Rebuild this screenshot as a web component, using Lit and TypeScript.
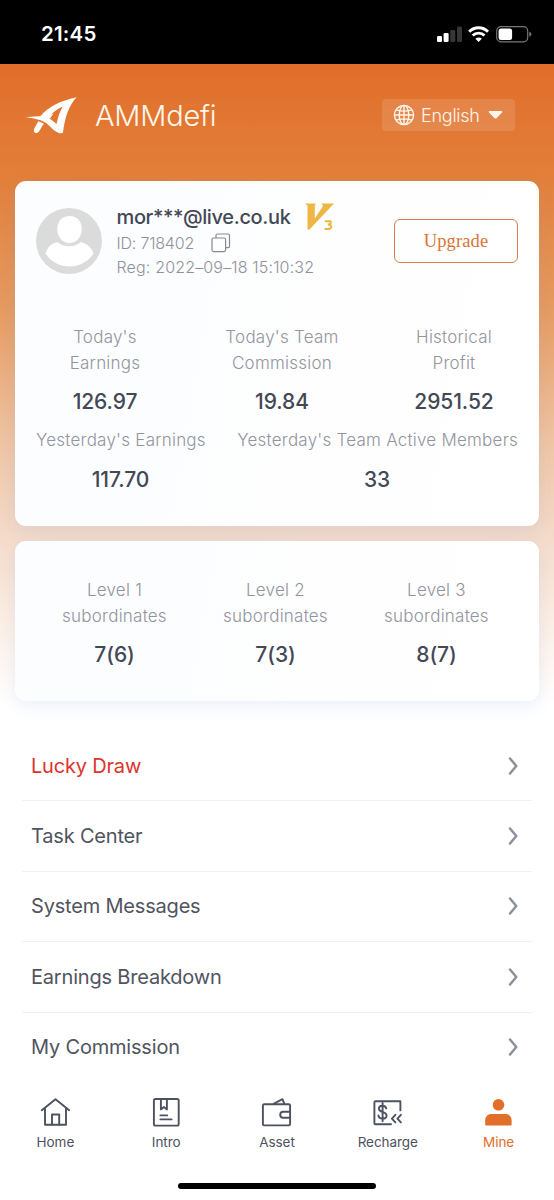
import { LitElement, html, css, svg } from "lit";
import { customElement } from "lit/decorators.js";
import { classMap } from "lit/directives/class-map.js";

const navIcons = {
  home: svg`<path d="M1.800 13.200 15.500 2.300 29.200 13.200"/><path d="M5 11.500V27.700H26V11.500"/><path d="M12 27.700V17.500H19.200V27.700"/>`,
  intro: svg`<rect x="2.900" y="2" width="24.800" height="26.600" rx="1.600"/><path d="M9.900 2V12.400L12.900 10 15.900 12.400V2"/><path d="M9.400 18.400H16.200M9.400 22.400H20.600"/>`,
  asset: svg`<rect x="1.900" y="7.200" width="27.200" height="21.200" rx="1.400"/><path d="M12.600 6.800 21.400 2.200 23.400 6.800"/><path d="M29 14.800H22.200a3 3 0 0 0 0 6H29"/>`,
  recharge: svg`<path d="M28.400 13.400V4.300H3.400a1 1 0 0 0-1 1V26.300a1 1 0 0 0 1 1H19"/><path d="M14.300 11.400C13.800 9.400 12.300 8.700 10.400 8.700 8.300 8.700 6.900 9.900 6.900 11.700c0 4.300 7.700 2.500 7.700 6.700 0 2-1.700 3.200-4.100 3.200-2.300 0-3.900-1.100-4.100-3.200M10.600 6V24.300"/><path d="M23.400 17.800 19.900 21.600 23.400 25.400M28.900 17.800 25.400 21.600 28.900 25.400"/>`,
  mine: svg`<circle cx="15.500" cy="7.800" r="5.800" fill="currentColor" stroke="none"/><path fill="currentColor" stroke="none" d="M2.200 27.500V23.600C2.200 19.500 4.800 17 8.800 17H22.200C26.200 17 28.600 19.500 28.600 23.600V27.500Q28.600 28.400 27.700 28.400H3.100Q2.200 28.400 2.200 27.500Z"/>`,
};

@customElement("app-root")
export class AppRoot extends LitElement {
  static styles = css`
    :host { display: block; font-family: Inter, "Liberation Sans", sans-serif; color: #434855; }
    * { box-sizing: border-box; }
    svg { display: block; flex: none; }
    .screen { width: 554px; height: 1200px; overflow: hidden; display: flex; flex-direction: column; background: #fff; }
    .status { height: 64px; flex: none; background: #000; color: #fff; display: flex; justify-content: space-between; align-items: center; padding: 3px 22px 0 41px; }
    .time { font-size: 20.500px; font-weight: 600; letter-spacing: 0.200px; }
    .body { flex: 1; min-height: 0; display: flex; flex-direction: column; background: linear-gradient(#e16e2a 0, #e2803b 116px, #e69b60 246px, #efc4a2 376px, #f4dccb 476px, #fbeee4 556px, #fff 640px); }
    .top { height: 117px; flex: none; display: flex; justify-content: space-between; align-items: center; padding: 0 39px 15px 26px; color: #fff7ee; }
    .brand { display: flex; align-items: center; gap: 18px; font-size: 29px; font-weight: 300; letter-spacing: -0.200px; }
    .lang { width: 133px; height: 32px; border-radius: 4px; background: rgba(255, 255, 255, 0.12); display: flex; align-items: center; padding: 0 12px 0 11px; font-size: 18px; font-weight: 300; letter-spacing: -0.250px; }
    .word { flex: 1; padding-left: 6px; }
    .card { margin: 0 15px 15px; border-radius: 11px; flex: none; background: linear-gradient(100deg, #fbfdff, #fefefe 65%, #fff); box-shadow: 0 5px 16px rgba(110, 145, 220, 0.140); }
    .account { height: 345px; padding: 23px 21px 0; }
    .team { height: 160px; padding: 37px 21px 0 19px; display: grid; grid-template-columns: repeat(3, 161px); }
    .profile { display: flex; height: 75px; }
    .avatar { margin-top: 4px; }
    .who { flex: 1; margin-left: 14.500px; white-space: nowrap; }
    .line { display: flex; align-items: center; }
    .mail { height: 26px; font-size: 20px; font-weight: 500; letter-spacing: -0.360px; gap: 15px; }
    .meta { height: 25px; font-size: 16px; font-weight: 300; color: #8f929c; gap: 17px; letter-spacing: -0.200px; }
    .reg { letter-spacing: 0.160px; height: 24px; }
    .upgrade { margin-top: 15px; width: 124px; height: 44px; border: 1px solid #dd8047; border-radius: 6px; background: none; padding: 0; color: #d97436; font: 18.500px "Liberation Serif", serif; letter-spacing: 0.100px; }
    .stats { margin-top: 46px; display: grid; grid-template-columns: 138px 1fr 128px; }
    .pair { margin-top: 16px; display: flex; justify-content: space-between; }
    .stat { display: flex; flex-direction: column; align-items: center; text-align: center; white-space: pre-line; }
    .label { font-size: 17px; font-weight: 300; line-height: 25.500px; letter-spacing: 0.230px; color: #92949e; }
    .value { margin-top: 10px; font-size: 21px; font-weight: 500; line-height: 32px; margin-bottom: -6px; letter-spacing: -0.080px; }
    .pair .value { margin-left: -1px; }
    .menu { margin: 15px 22px 0; flex: none; }
    .item { height: 70.400px; display: flex; align-items: center; justify-content: space-between; padding: 0 13px 0 9px; border-bottom: 1px solid #f0f1f3; font-size: 20px; font-weight: 400; letter-spacing: -0.190px; color: #50545f; }
    .item:last-child { border-color: transparent; }
    .lucky { color: #dc342c; }
    .nav { height: 117px; flex: none; background: #fff; display: grid; grid-template-columns: repeat(5, 1fr); grid-template-rows: 100px 6px; }
    .tab { display: flex; flex-direction: column; align-items: center; padding-top: 14px; gap: 4px; font-size: 13.500px; line-height: 20px; letter-spacing: -0.050px; color: #4d5260; }
    .active { color: #e16e2a; }
    .bar { grid-column: 1 / -1; justify-self: center; width: 198px; height: 6px; border-radius: 3px; background: #000; }
  `;

  private stat(label: string, value: string) {
    return html`<div class="stat"><span class="label">${label}</span><span class="value">${value}</span></div>`;
  }

  private tab(icon: keyof typeof navIcons, label: string) {
    return html`<div class=${classMap({ tab: true, active: icon === "mine" })}>
      <svg width="31" height="31" viewBox="0 0 31 31" fill="none" stroke="currentColor" stroke-width="1.900" stroke-linejoin="round" stroke-linecap="round">${navIcons[icon]}</svg>
      <span>${label}</span>
    </div>`;
  }

  render() {
    return html`<div class="screen">
      <div class="status">
        <span class="time">21:45</span>
        <svg width="96" height="18" viewBox="0 0 96 18" fill="none">
          <g fill="#fff"><rect x="1" y="11" width="5" height="6" rx="1.300"/><rect x="7.600" y="8" width="5" height="9" rx="1.300"/></g>
          <g fill="#363636"><rect x="14.300" y="5" width="5" height="12" rx="1.300"/><rect x="21" y="1.500" width="5" height="15.500" rx="1.300"/></g>
          <g stroke="#fff" stroke-width="2.900"><path d="M33.200 6.700A13.200 13.200 0 0 1 52 6.700"/><path d="M36.700 10.600A8.300 8.300 0 0 1 48.500 10.600"/></g>
          <path fill="#fff" d="M42.600 17 39.400 13.700A4.600 4.600 0 0 1 45.800 13.700Z"/>
          <rect x="60.700" y="1.600" width="31" height="15.200" rx="4.300" stroke="#777" stroke-width="1.200"/>
          <rect x="62.600" y="3.500" width="13.500" height="11.500" rx="2.500" fill="#fff"/>
          <path fill="#777" d="M93.300 6.700Q95.300 7.500 95.300 9.200T93.300 11.700Z"/>
        </svg>
      </div>
      <div class="body">
        <div class="top">
          <div class="brand">
            <svg width="51" height="37" viewBox="0 0 51 37" fill="#fff">
              <path fill-rule="evenodd" d="M50.500 .3C43 8.500 39.200 19 37 35.500Q36.500 36.500 34 36.200 29.500 35.500 24 29.500 20.500 25.500 15.500 23.500 8 21.200 0 20.300 8 19.300 14.200 19.300 26 5.500 50.500 .3ZM36.500 9.500Q29 13 23.200 19.500L20.500 20.300Q25 22 30.500 27 32 18 36.500 9.500Z"/>
              <path d="M12.300 24.300 17.800 26.500 13 34.500Q10.500 37 8.700 35.500 7 34 8.500 31Z"/>
              <path d="M13 20.200Q21 19.600 27.500 16.500L24 21.500 17 23.500Z"/>
            </svg>
            <span>AMMdefi</span>
          </div>
          <div class="lang">
            <svg width="22" height="22" viewBox="0 0 22 22" fill="none" stroke="currentColor" stroke-width="1.400"><circle cx="11" cy="11" r="9.600"/><ellipse cx="11" cy="11" rx="4.800" ry="9.600"/><path d="M11 1.400V20.600M1.400 11H20.600M3.200 5.800Q11 8.400 18.800 5.800M3.200 16.200Q11 13.600 18.800 16.200"/></svg>
            <span class="word">English</span>
            <svg width="15" height="8" viewBox="0 0 15 8" fill="currentColor"><path d="M1.400 0H13.600Q14.800 .3 14 1.400L8.500 7.200Q7.500 8 6.500 7.200L1 1.400Q.2 .3 1.400 0Z"/></svg>
          </div>
        </div>
        <section class="card account">
          <div class="profile">
            <svg class="avatar" width="66" height="66" viewBox="0 0 66 66"><circle cx="33" cy="33" r="33" fill="#dbdbdb"/><path fill="#fff" d="M9.500 45.500C12 37.500 17 34.800 21.500 34.300 27.500 39.500 38.500 39.500 44.500 34.300 49 34.800 55 38 57.500 45.500 52 54 43 58.500 33.500 58.500S15 54 9.500 45.500Z"/><path fill="#fff" stroke="#dbdbdb" stroke-width="1" d="M33.500 7.500C42 7.500 46.500 14 46.200 21.500 46 29 41 35.500 33.500 35.500S21 29 20.800 21.500C20.600 14 25 7.500 33.500 7.500Z"/></svg>
            <div class="who">
              <div class="line mail"><span>mor***@live.co.uk</span>
                <svg width="30" height="28" viewBox="0 0 30 28" fill="none"><path fill="#edb645" d="M0 .5H11L9.800 2.500V15.500L18 3 16.500 .5H29L4.500 26.500H2.500V2.800Z"/><path d="M19.800 18.300H25.500Q27 20.800 23 21.500 26.700 21.800 26.200 24.300 25.300 26.500 19.500 25.800" stroke="#edb645" stroke-width="2"/></svg>
              </div>
              <div class="line meta"><span>ID: 718402</span>
                <svg width="20" height="20" viewBox="0 0 20 20" fill="none" stroke="#858997" stroke-width="1.200"><rect x="1" y="5" width="13.600" height="13.600" rx="1.500"/><path d="M5 5V2.500Q5 1 6.500 1H17Q18.500 1 18.500 2.500V13Q18.500 14.600 17 14.600H14.600"/></svg>
              </div>
              <div class="line meta reg">Reg: 2022–09–18 15:10:32</div>
            </div>
            <button class="upgrade">Upgrade</button>
          </div>
          <div class="stats">
            ${this.stat("Today's\nEarnings", "126.97")}
            ${this.stat("Today's Team\nCommission", "19.84")}
            ${this.stat("Historical\nProfit", "2951.52")}
          </div>
          <div class="pair">
            ${this.stat("Yesterday's Earnings", "117.70")}
            ${this.stat("Yesterday's Team Active Members", "33")}
          </div>
        </section>
        <section class="card team">
          ${this.stat("Level 1\nsubordinates", "7(6)")}
          ${this.stat("Level 2\nsubordinates", "7(3)")}
          ${this.stat("Level 3\nsubordinates", "8(7)")}
        </section>
        <div class="menu">
          ${["Lucky Draw", "Task Center", "System Messages", "Earnings Breakdown", "My Commission"].map(
            (name, i) => html`<div class=${classMap({ item: true, lucky: i === 0 })}>
              <span>${name}</span>
              <svg width="12" height="20" viewBox="0 0 12 20" fill="none" stroke="#8c909b" stroke-width="2.500" stroke-linecap="round" stroke-linejoin="round"><path d="M3 2.500 9.300 10 3 17.500"/></svg>
            </div>`
          )}
        </div>
      </div>
      <nav class="nav">
        ${this.tab("home", "Home")}${this.tab("intro", "Intro")}${this.tab("asset", "Asset")}${this.tab("recharge", "Recharge")}${this.tab("mine", "Mine")}
        <div class="bar"></div>
      </nav>
    </div>`;
  }
}
